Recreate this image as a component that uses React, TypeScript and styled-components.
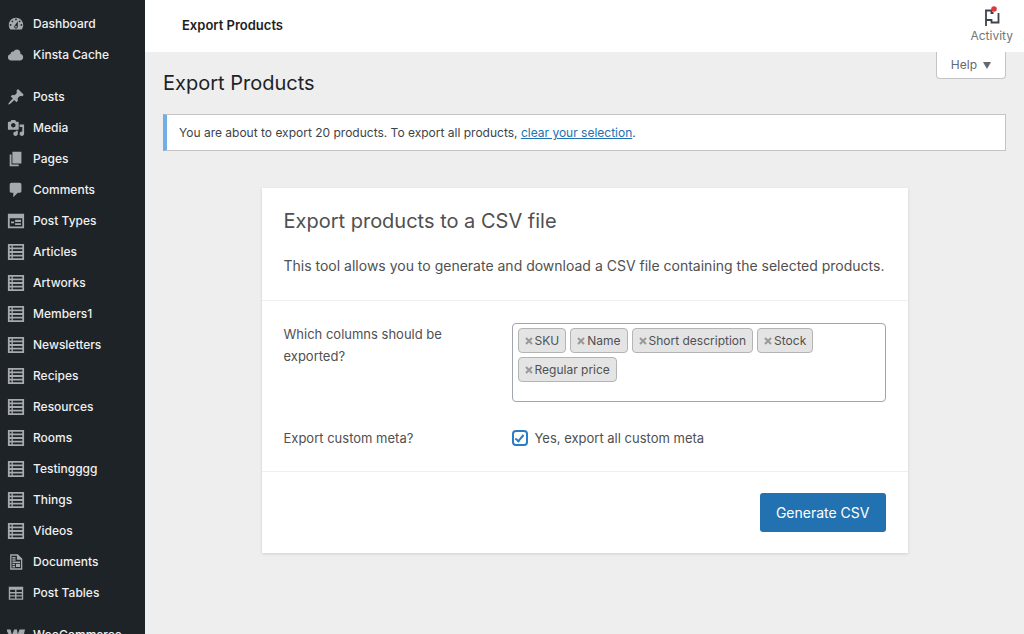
import React from "react";
import styled, { createGlobalStyle } from "styled-components";

const GlobalStyle = createGlobalStyle`
  *, *::before, *::after { box-sizing: border-box; }
  body {
    margin: 0;
    background: #eeeeee;
    color: #3c434a;
    font-family: Inter, "Liberation Sans", sans-serif;
    font-size: 12px;
    line-height: 20px;
  }
  h1, h2, p, ul { margin: 0; padding: 0; }
  ul { list-style: none; }
  button, input { font: inherit; margin: 0; }
`;

const Shell = styled.div`
  display: flex;
  height: 100vh;
`;

const Sidebar = styled.nav`
  flex: 0 0 145px;
  padding-top: 8px;
  background: #1d2327;
  overflow: hidden;
`;

const MenuGroup = styled.ul`
  & + & { margin-top: 11px; }
`;

const MenuLink = styled.a`
  display: flex;
  align-items: center;
  gap: 8px;
  height: 31px;
  padding-left: 7px;
  color: #f0f0f1;
  font-size: 12px;
  font-weight: 500;
  text-decoration: none;
  white-space: nowrap;
`;

const MenuIcon = styled.svg`
  flex: none;
  width: 18px;
  height: 18px;
  fill: #a7aaad;
`;

const Main = styled.div`
  flex: 1;
  min-width: 0;
  overflow: auto;
`;

const TopBar = styled.header`
  display: flex;
  align-items: center;
  justify-content: space-between;
  height: 52px;
  padding: 0 11px 2px 37px;
  background: #ffffff;
`;

const TopTitle = styled.p`
  color: #1e1e1e;
  font-size: 13px;
  font-weight: 600;
`;

const ActivityButton = styled.button`
  display: flex;
  flex-direction: column;
  align-items: center;
  padding: 0;
  border: 0;
  background: none;
  color: #757575;
  line-height: 18px;

  svg { width: 20px; height: 22px; }
`;

const HelpRow = styled.div`
  display: flex;
  justify-content: flex-end;
  height: 19px;
  padding-right: 18px;
`;

const HelpButton = styled.button`
  display: flex;
  align-items: center;
  gap: 6px;
  height: 27px;
  padding: 0 14px;
  border: 1px solid #c3c4c7;
  border-top: 0;
  border-radius: 0 0 4px 4px;
  background: #ffffff;
  color: #646970;

  svg { width: 8px; height: 7px; fill: #646970; }
`;

const Content = styled.main`
  padding: 0 18px 18px;
`;

const PageTitle = styled.h1`
  color: #1d2327;
  font-size: 20px;
  font-weight: 400;
  line-height: 24px;
`;

const Notice = styled.div`
  margin-top: 19px;
  padding: 8px 12px;
  border: 1px solid #c3c4c7;
  border-left: 4px solid #72aee6;
  background: #ffffff;
  line-height: 19px;

  a { color: #2271b1; }
`;

const Card = styled.form`
  max-width: 646px;
  margin: 37px auto 0;
  background: #ffffff;
  box-shadow: 0 1px 3px rgba(0, 0, 0, 0.13);
  color: #505050;
`;

const CardHeader = styled.header`
  padding: 20px 22px 22px;
  border-bottom: 1px solid #eeeeee;
`;

const CardTitle = styled.h2`
  font-size: 20px;
  font-weight: 400;
  line-height: 26px;
`;

const Lead = styled.p`
  margin-top: 20px;
  font-size: 14px;
  line-height: 24px;
`;

const Fields = styled.div`
  padding: 22px;
`;

const Field = styled.div`
  display: grid;
  grid-template-columns: 180px minmax(0, 1fr);
  column-gap: 48px;
  align-items: start;

  & + & { margin-top: 25px; }
`;

const FieldLabel = styled.label`
  font-size: 13px;
  line-height: 22px;
`;

const TagBox = styled.ul`
  display: flex;
  flex-wrap: wrap;
  align-content: flex-start;
  gap: 4px;
  min-height: 79px;
  padding: 4px 5px;
  border: 1px solid #a0a5b0;
  border-radius: 4px;
`;

const Tag = styled.li`
  display: flex;
  align-items: center;
  height: 25px;
  padding: 0 6px;
  border: 1px solid #b4b4b4;
  border-radius: 4px;
  background: #e4e4e4;
`;

const TagRemove = styled.button`
  display: flex;
  padding: 0 2px 0 0;
  border: 0;
  background: none;

  svg { width: 8px; height: 8px; stroke: #999999; stroke-width: 2; }
`;

const CheckLabel = styled.label`
  display: flex;
  align-items: center;
  gap: 7px;
  font-size: 13px;
  line-height: 22px;
`;

const Check = styled.input`
  appearance: none;
  flex: none;
  width: 16px;
  height: 16px;
  border: 2px solid #2a7cc4;
  border-radius: 4px;
  background: #ffffff;
  display: grid;
  place-items: center;

  &:checked::before {
    content: "";
    width: 5px;
    height: 9px;
    margin-top: -2px;
    border: solid #2a7cc4;
    border-width: 0 2px 2px 0;
    transform: rotate(40deg);
  }
`;

const CardFooter = styled.footer`
  display: flex;
  justify-content: flex-end;
  padding: 21px 22px;
  border-top: 1px solid #eeeeee;
`;

const SubmitButton = styled.button`
  height: 39px;
  padding: 0 16px;
  border: 0;
  border-radius: 3px;
  background: #2271b1;
  color: #ffffff;
  font-size: 14px;
`;

const icons = {
  dashboard:
    "M3.76 16h12.48c1.1-1.37 1.76-3.11 1.76-5 0-4.42-3.58-8-8-8s-8 3.58-8 8c0 1.89.66 3.63 1.76 5zM10 4c.55 0 1 .45 1 1s-.45 1-1 1-1-.45-1-1 .45-1 1-1zM6 6c.55 0 1 .45 1 1s-.45 1-1 1-1-.45-1-1 .45-1 1-1zm8 0c.55 0 1 .45 1 1s-.45 1-1 1-1-.45-1-1 .45-1 1-1zm-5.37 5.55L12 7v6c0 1.1-.9 2-2 2s-2-.9-2-2c0-.57.24-1.08.63-1.45zM4 10c.55 0 1 .45 1 1s-.45 1-1 1-1-.45-1-1 .45-1 1-1zm12 0c.55 0 1 .45 1 1s-.45 1-1 1-1-.45-1-1 .45-1 1-1zm-5 3c0-.55-.45-1-1-1s-1 .45-1 1 .45 1 1 1 1-.45 1-1z",
  cloud:
    "M14.9 9c1.8.2 3.1 1.7 3.1 3.5 0 1.9-1.6 3.5-3.5 3.5h-10C2.6 16 1 14.4 1 12.5 1 10.7 2.3 9.3 4.1 9 4 8.9 4 8.7 4 8.5 4 7.1 5.1 6 6.5 6c.3 0 .7.1.9.2C8.1 4.9 9.4 4 11 4c2.2 0 4 1.8 4 4 0 .4-.1.7-.1 1z",
  pin: "M10.44 3.02l1.82-1.82 6.36 6.35-1.83 1.82c-1.05-.68-2.48-.57-3.41.36l-.75.75c-.92.93-1.04 2.35-.35 3.41l-1.83 1.82-2.41-2.41-2.8 2.79c-.42.42-3.38 2.71-3.8 2.29s1.86-3.39 2.28-3.81l2.79-2.79L4.1 9.36l1.83-1.82c1.05.69 2.48.57 3.4-.36l.75-.75c.93-.92 1.05-2.35.36-3.41z",
  media:
    "M13 11V4c0-.55-.45-1-1-1h-1.67L9 1H5L3.67 3H2c-.55 0-1 .45-1 1v7c0 .55.45 1 1 1h10c.55 0 1-.45 1-1zM7 4.5c1.38 0 2.5 1.12 2.5 2.5S8.38 9.5 7 9.5 4.5 8.38 4.5 7 5.62 4.5 7 4.5zM14 6h5v10.5c0 1.38-1.12 2.5-2.5 2.5S14 17.88 14 16.5s1.12-2.5 2.5-2.5c.17 0 .34.02.5.05V9h-3V6zm-4 8.05V13h2v3.5c0 1.38-1.12 2.5-2.5 2.5S7 17.88 7 16.5 8.12 14 9.5 14c.17 0 .34.02.5.05z",
  page: "M6 15V2h10v13H6zm-1 1h8v2H3V5h2v11z",
  comment:
    "M5 2h9c1.1 0 2 .9 2 2v7c0 1.1-.9 2-2 2h-2l-5 5v-5H5c-1.1 0-2-.9-2-2V4c0-1.1.9-2 2-2z",
  types:
    "M1 2h18v16H1zM3 7v9h14V7zM4.500 10.500h3.500v2h-3.500zM9 8.500h6.500V11H9zM9 12.500h6.500v2H9z",
  list: "M1 1h18v18H1zM3 3v2h2V3zM6.500 3v2H17V3zM3 7v2h2V7zM6.500 7v2H17V7zM3 11v2h2v-2zM6.500 11v2H17v-2zM3 15v2h2v-2zM6.500 15v2H17v-2z",
  document:
    "M3.500 1.500h8.500l5 5v12H3.500zM5 3v14h10.500V7.500H11V3zM6 4.500h3.500V6H6zM6 7h3.500v1.500H6zM6 9.500h8.500V11H6zM6 12h3v1.500H6zM10 12h4.500v3.500H10zM6 14.500h3V16H6z",
  table:
    "M2 3h16v14.500H2zM3.500 6.500v2.500h5.500V6.500zM10.500 6.500v2.500h6V6.500zM3.500 10.500v2h5.500v-2zM10.500 10.500v2h6v-2zM3.500 14v2h5.500v-2zM10.500 14v2h6v-2z",
  woo: "M-1 4h5l1.500 6L8 4h3l1 5 2-5h6l-3 13h-3l-2-5-3 5H6z",
};

type IconName = keyof typeof icons;

const menu: [string, IconName][][] = [
  [
    ["Dashboard", "dashboard"],
    ["Kinsta Cache", "cloud"],
  ],
  [
    ["Posts", "pin"],
    ["Media", "media"],
    ["Pages", "page"],
    ["Comments", "comment"],
    ["Post Types", "types"],
    ["Articles", "list"],
    ["Artworks", "list"],
    ["Members1", "list"],
    ["Newsletters", "list"],
    ["Recipes", "list"],
    ["Resources", "list"],
    ["Rooms", "list"],
    ["Testingggg", "list"],
    ["Things", "list"],
    ["Videos", "list"],
    ["Documents", "document"],
    ["Post Tables", "table"],
  ],
  [["WooCommerce", "woo"]],
];

const columns = ["SKU", "Name", "Short description", "Stock", "Regular price"];

export default function App() {
  return (
    <>
      <GlobalStyle />
      <Shell>
        <Sidebar aria-label="Main menu">
          {menu.map((group) => (
            <MenuGroup key={group[0][0]}>
              {group.map(([name, icon]) => (
                <li key={name}>
                  <MenuLink href="#">
                    <MenuIcon viewBox="0 0 20 20" aria-hidden="true">
                      <path fillRule="evenodd" d={icons[icon]} />
                    </MenuIcon>
                    {name}
                  </MenuLink>
                </li>
              ))}
            </MenuGroup>
          ))}
        </Sidebar>
        <Main>
          <TopBar>
            <TopTitle>Export Products</TopTitle>
            <ActivityButton type="button">
              <svg viewBox="0 0 20 22" fill="none" aria-hidden="true">
                <path
                  d="M6.500 5.500H4V21M4 15h5.500v2.500H16.500V8M4 5.500h5.500v2.500h2"
                  stroke="#3c434a"
                  strokeWidth="1.800"
                />
                <circle cx="12" cy="4" r="2.800" fill="#e0383a" />
              </svg>
              Activity
            </ActivityButton>
          </TopBar>
          <HelpRow>
            <HelpButton type="button">
              Help
              <svg viewBox="0 0 8 7" aria-hidden="true">
                <path d="M0 0h8L4 7z" />
              </svg>
            </HelpButton>
          </HelpRow>
          <Content>
            <PageTitle>Export Products</PageTitle>
            <Notice>
              You are about to export 20 products. To export all products,{" "}
              <a href="#">clear your selection</a>.
            </Notice>
            <Card onSubmit={(event) => event.preventDefault()}>
              <CardHeader>
                <CardTitle>Export products to a CSV file</CardTitle>
                <Lead>
                  This tool allows you to generate and download a CSV file
                  containing the selected products.
                </Lead>
              </CardHeader>
              <Fields>
                <Field>
                  <FieldLabel as="span" id="columns-label">
                    Which columns should be exported?
                  </FieldLabel>
                  <TagBox aria-labelledby="columns-label">
                    {columns.map((column) => (
                      <Tag key={column}>
                        <TagRemove type="button" aria-label={`Remove ${column}`}>
                          <svg viewBox="0 0 8 8" aria-hidden="true">
                            <path d="M1 1l6 6M7 1l-6 6" />
                          </svg>
                        </TagRemove>
                        {column}
                      </Tag>
                    ))}
                  </TagBox>
                </Field>
                <Field>
                  <FieldLabel htmlFor="custom-meta">Export custom meta?</FieldLabel>
                  <CheckLabel>
                    <Check id="custom-meta" type="checkbox" defaultChecked />
                    Yes, export all custom meta
                  </CheckLabel>
                </Field>
              </Fields>
              <CardFooter>
                <SubmitButton type="submit">Generate CSV</SubmitButton>
              </CardFooter>
            </Card>
          </Content>
        </Main>
      </Shell>
    </>
  );
}
